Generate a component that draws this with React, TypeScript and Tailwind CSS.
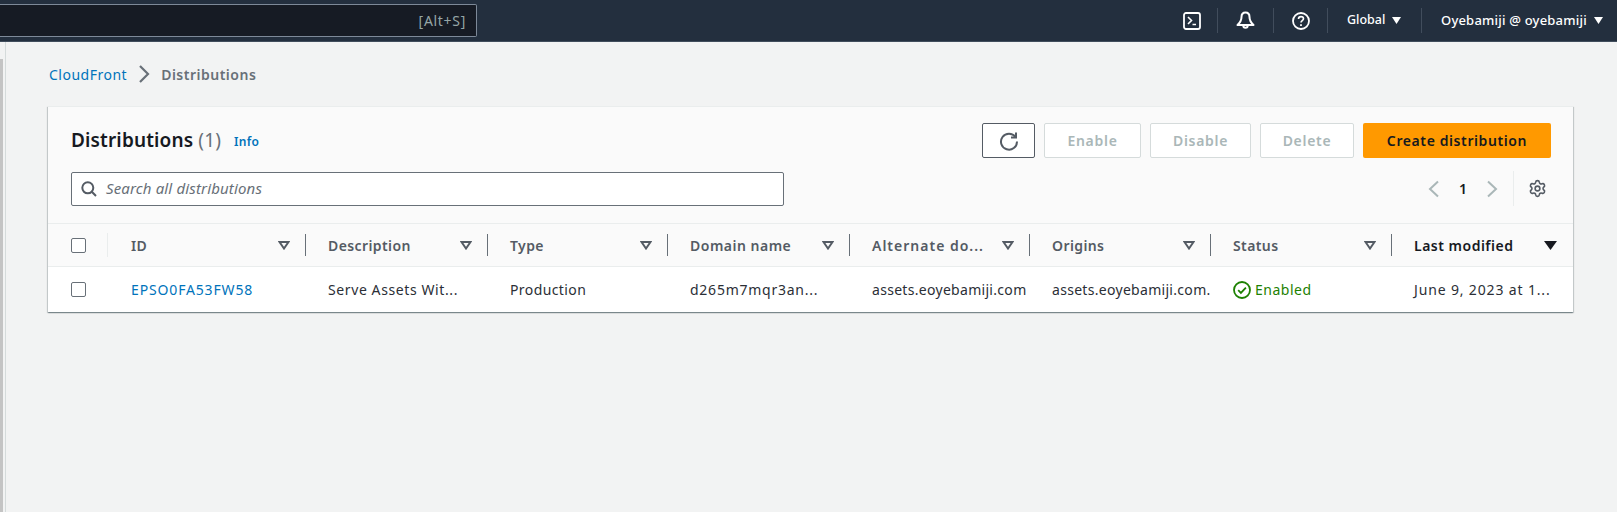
import React from 'react';
import { Settings } from 'lucide-react';

// shared column template for the header row and the data row
const GRID = 'grid grid-cols-[60px_198px_182px_180px_182px_180px_181px_181px_181px]';

const columns = [
  { label: 'ID', pad: 'pl-[23px]', track: 'tracking-[0.4px]' },
  { label: 'Description', pad: 'pl-[22px]', track: 'tracking-[0.4px]' },
  { label: 'Type', pad: 'pl-[22px]', track: 'tracking-[0.4px]' },
  { label: 'Domain name', pad: 'pl-[22px]', track: 'tracking-[0.5px]' },
  { label: 'Alternate do...', pad: 'pl-[22px]', track: 'tracking-[1px]' },
  { label: 'Origins', pad: 'pl-[22px]', track: 'tracking-[0.4px]' },
  { label: 'Status', pad: 'pl-[22px]', track: 'tracking-[0.4px]' },
  { label: 'Last modified', pad: 'pl-[22px]', track: 'tracking-[0.5px]', sorted: true },
];

function Caret({ className }: { className?: string }) {
  return (
    <svg width="9" height="7" viewBox="0 0 9 7" className={className} fill="currentColor">
      <path d="M0 0h9L4.5 7z" />
    </svg>
  );
}

function TopBar() {
  return (
    <header className="flex h-[42px] items-center border-b border-[#414d5c] bg-[#232f3e]">
      <div className="flex h-[33px] w-[477px] items-center justify-end rounded-r-[2px] border border-l-0 border-[#7d8998] bg-[#161b24] pr-[10px]">
        <span className="text-[14px] tracking-[0.7px] text-[#95a5a6]">[Alt+S]</span>
      </div>
      <div className="ml-auto flex items-center text-white">
        <div className="flex h-[25px] w-[35px] items-center border-r border-[#414d5c]">
          <svg width="18" height="18" viewBox="0 0 18 18" fill="none" stroke="currentColor" strokeWidth="1.8">
            <rect x="1" y="1" width="16" height="16" rx="2" />
            <path d="M5 5l3.5 3.5L5 12M9.5 12.5h3.5" strokeWidth="1.6" />
          </svg>
        </div>
        <div className="flex h-[25px] w-[56px] items-center justify-center border-r border-[#414d5c]">
          <svg width="19" height="19" viewBox="0 0 19 19" fill="none" stroke="currentColor" strokeWidth="2" strokeLinejoin="round">
            <path d="M9.500 1.500C7 1.500 5.500 3.500 5.500 6c0 3.500-1.200 5.500-4 8h16c-2.800-2.500-4-4.500-4-8 0-2.500-1.500-4.500-4-4.500z" />
            <path d="M7.300 14.500a2.200 2.200 0 1 0 4.400 0" />
          </svg>
        </div>
        <div className="flex h-[25px] w-[54px] items-center justify-center border-r border-[#414d5c]">
          <svg width="18" height="18" viewBox="0 0 18 18" fill="none" stroke="currentColor" strokeWidth="1.8">
            <circle cx="9" cy="9" r="8" />
            <path d="M6.500 7c0-1.500 1.100-2.400 2.500-2.400s2.500.9 2.500 2.200c0 1.800-2.500 1.900-2.500 3.700" strokeWidth="1.600" />
            <path d="M9 12.200v1.800" strokeWidth="1.800" />
          </svg>
        </div>
        <div className="flex h-[25px] w-[94px] items-center gap-[7px] border-r border-[#414d5c] pl-[19px] text-[12.5px] font-medium">
          Global
          <Caret />
        </div>
        <div className="flex h-[25px] w-[195px] items-center gap-[7px] pl-[19px] text-[13px] font-medium tracking-[0.2px]">
          Oyebamiji @ oyebamiji
          <Caret />
        </div>
      </div>
    </header>
  );
}

function OutlineButton({ label, width }: { label: string; width: string }) {
  return (
    <button className={`${width} h-[35px] rounded-[2px] border border-[#d5dbdb] bg-white text-[14px] font-semibold tracking-[0.7px] text-[#aab7b8]`}>
      {label}
    </button>
  );
}

function Checkbox() {
  return <span className="block h-[15px] w-[15px] rounded-[2px] border border-[#687078] bg-white" />;
}

function Toolbar() {
  return (
    <div className="flex flex-col gap-[13px] pl-[23px] pr-[22px] pt-[16px]">
      <div className="flex items-center">
        <h1 className="text-[19px] font-semibold tracking-[0.15px] text-[#16191f]">
          Distributions <span className="font-normal text-[#687078]">(1)</span>
        </h1>
        <a className="ml-[13px] mt-[3px] text-[12px] font-semibold tracking-[0.3px] text-[#0073bb]">Info</a>
        <div className="ml-auto flex gap-[9px]">
          <button className="flex h-[35px] w-[53px] items-center justify-center rounded-[2px] border border-[#545b64] bg-white text-[#545b64]">
            <svg width="20" height="20" viewBox="0 0 20 20" fill="none" stroke="currentColor" strokeWidth="2">
              <path d="M16.500 6A8 8 0 1 0 18 10.500" />
              <path d="M17 1.500V6.500h-5" />
            </svg>
          </button>
          <OutlineButton label="Enable" width="w-[97px]" />
          <OutlineButton label="Disable" width="w-[101px]" />
          <OutlineButton label="Delete" width="w-[94px]" />
          <button className="h-[35px] w-[188px] rounded-[2px] bg-[#ff9900] text-[14px] font-semibold tracking-[0.6px] text-[#16191f]">
            Create distribution
          </button>
        </div>
      </div>
      <div className="flex items-center">
        <div className="flex h-[34px] w-[713px] items-center gap-[9px] rounded-[2px] border border-[#687078] bg-white pl-[9px]">
          <svg width="16" height="16" viewBox="0 0 16 16" fill="none" stroke="#545b64" strokeWidth="2">
            <circle cx="6.800" cy="6.800" r="5.500" />
            <path d="M10.800 10.800L15 15" />
          </svg>
          <span className="text-[15px] italic tracking-[0.15px] text-[#687078]">Search all distributions</span>
        </div>
        <div className="ml-auto flex h-[35px] items-center">
          <svg width="12" height="18" viewBox="0 0 12 18" fill="none" stroke="#aab7b8" strokeWidth="2">
            <path d="M10 1.500L2 9l8 7.500" />
          </svg>
          <span className="mx-[19px] text-[14px] font-semibold text-[#16191f]">1</span>
          <svg width="12" height="18" viewBox="0 0 12 18" fill="none" stroke="#aab7b8" strokeWidth="2">
            <path d="M2 1.500L10 9l-8 7.500" />
          </svg>
          <div className="ml-[15px] flex h-[35px] w-[38px] items-center justify-end border-l border-[#eaeded] pr-[4px]">
            <Settings size={19} strokeWidth={2} className="text-[#545b64]" />
          </div>
        </div>
      </div>
    </div>
  );
}

function DistributionsTable() {
  return (
    <div className="mt-[17px]">
      <div className={`${GRID} h-[44px] border-y border-[#eaeded] text-[14px]`}>
        <div className="flex items-center pl-[23px]">
          <div className="flex h-[24px] w-[37px] items-center border-r border-[#eaeded]">
            <Checkbox />
          </div>
        </div>
        {columns.map((col, i) => (
          <div
            key={col.label}
            className={`flex items-center font-semibold ${col.pad} ${col.sorted ? 'pr-[16px] text-[#16191f]' : 'pr-[20px] text-[#545b64]'}`}
          >
            <span className={`whitespace-nowrap ${col.track}`}>{col.label}</span>
            {col.sorted ? (
              <svg width="13" height="9" viewBox="0 0 13 9" className="ml-auto" fill="currentColor">
                <path d="M0 0h13L6.500 9z" />
              </svg>
            ) : (
              <svg width="12" height="9" viewBox="0 0 12 9" className="ml-auto" fill="none" stroke="#545b64" strokeWidth="2">
                <path d="M1.500 1h9L6 7.500z" />
              </svg>
            )}
            {i < columns.length - 1 && <span className="ml-[15px] mr-[-20px] h-[22px] w-px shrink-0 bg-[#687078]" />}
          </div>
        ))}
      </div>
      <div className={`${GRID} h-[45px] items-center bg-white text-[14px] tracking-[0.3px] text-[#2b2f36]`}>
        <div className="pl-[23px]">
          <Checkbox />
        </div>
        <a className="pl-[23px] tracking-[0.85px] text-[#0073bb]">EPSO0FA53FW58</a>
        <span className="pl-[22px] tracking-[0.6px]">Serve Assets Wit...</span>
        <span className="pl-[22px] tracking-[0.4px]">Production</span>
        <span className="pl-[22px] tracking-[0.75px]">d265m7mqr3an...</span>
        <span className="whitespace-nowrap pl-[22px]">assets.eoyebamiji.com</span>
        <span className="whitespace-nowrap pl-[22px]">assets.eoyebamiji.com.</span>
        <span className="flex items-center gap-[4px] pl-[22px] tracking-[0.5px] text-[#1d8102]">
          <svg width="18" height="18" viewBox="0 0 18 18" fill="none" stroke="currentColor" strokeWidth="1.800">
            <circle cx="9" cy="9" r="8" />
            <path d="M5.200 9.200l2.700 2.700 5-5.300" />
          </svg>
          Enabled
        </span>
        <span className="whitespace-nowrap pl-[22px] tracking-[0.85px]">June 9, 2023 at 1...</span>
      </div>
    </div>
  );
}

export default function App() {
  return (
    <div className="min-h-[512px] bg-[#f2f3f3] font-['Noto_Sans',sans-serif]">
      <TopBar />
      <div className="flex">
        <aside className="h-[470px] w-[6px] shrink-0 border-r border-[#d5dbdb] pt-[17px]">
          <div className="h-full w-[3px] bg-[#c4c4c4]" />
        </aside>
        <main className="ml-[42px] w-[1525px]">
          <nav className="flex h-[64px] items-center pl-[1px] text-[14px]">
            <a className="tracking-[0.5px] text-[#0073bb]">CloudFront</a>
            <svg width="12" height="20" viewBox="0 0 12 20" className="mx-[11px]" fill="none" stroke="#687078" strokeWidth="2.200">
              <path d="M2 2l8 8-8 8" />
            </svg>
            <span className="font-semibold tracking-[0.5px] text-[#687078]">Distributions</span>
          </nav>
          <section className="border-t border-[#eaeded] bg-[#fafafa] shadow-[0_1px_1px_0_rgba(0,28,36,0.3),1px_1px_1px_0_rgba(0,28,36,0.15),-1px_1px_1px_0_rgba(0,28,36,0.15)]">
            <Toolbar />
            <DistributionsTable />
          </section>
        </main>
      </div>
    </div>
  );
}
